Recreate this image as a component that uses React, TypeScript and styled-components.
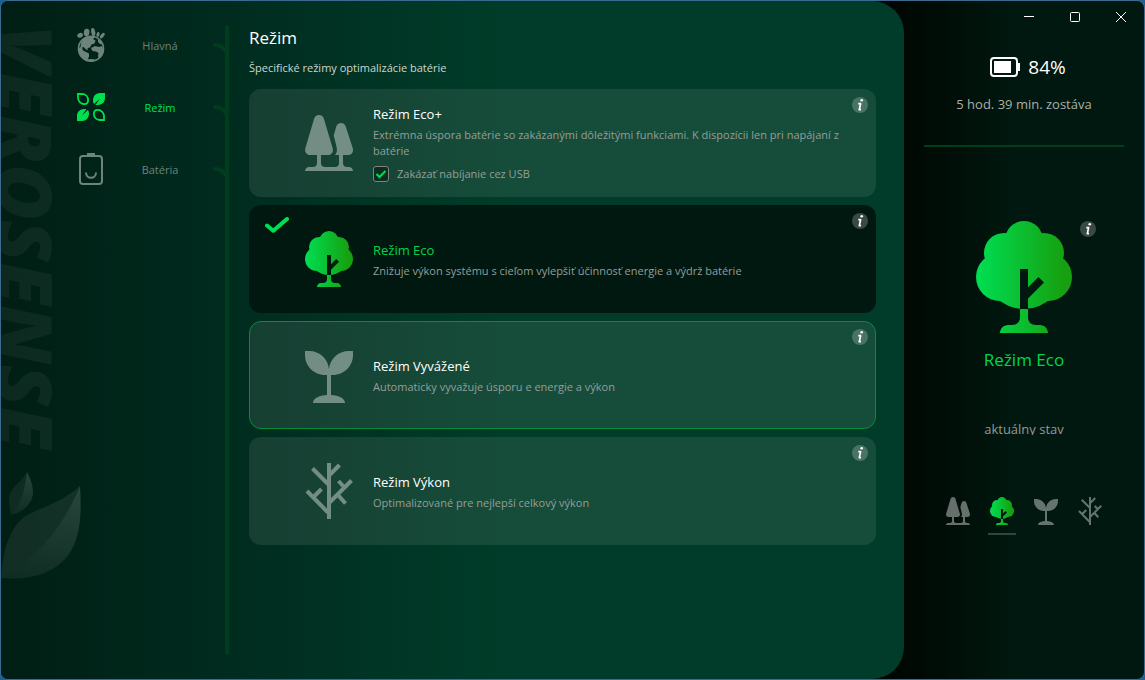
import React, { useId, useState } from "react";
import styled, { createGlobalStyle } from "styled-components";

type ModeId = "ecoPlus" | "eco" | "balanced" | "performance";

interface Mode {
  id: ModeId;
  title: string;
  description: string;
  option?: string;
}

const modes: Mode[] = [
  {
    id: "ecoPlus",
    title: "Režim Eco+",
    description:
      "Extrémna úspora batérie so zakázanými dôležitými funkciami. K dispozícii len pri napájaní z batérie",
    option: "Zakázať nabíjanie cez USB",
  },
  {
    id: "eco",
    title: "Režim Eco",
    description: "Znižuje výkon systému s cieľom vylepšiť účinnosť energie a výdrž batérie",
  },
  {
    id: "balanced",
    title: "Režim Vyvážené",
    description: "Automaticky vyvažuje úsporu e energie a výkon",
  },
  {
    id: "performance",
    title: "Režim Výkon",
    description: "Optimalizované pre nejlepší celkový výkon",
  },
];

const GlobalStyle = createGlobalStyle`
  *, *::before, *::after { box-sizing: border-box; }
  body {
    margin: 0;
    background: #1f5f94;
    font-family: "Open Sans", "Noto Sans", sans-serif;
    font-size: 11px;
    line-height: 16px;
    color: #fff;
  }
  button {
    font: inherit;
    color: inherit;
    background: none;
    border: 0;
    padding: 0;
    cursor: pointer;
  }
  svg { display: block; flex: none; }
`;

const Shell = styled.div`
  display: grid;
  grid-template-columns: minmax(0, 1fr) 240px;
  min-height: 100vh;
  border: 1px solid #3d6b90;
  border-radius: 8px;
  overflow: hidden;
  background: linear-gradient(
    to right,
    #000501 calc(100% - 260px),
    #00180f calc(100% - 130px)
  );
`;

const MainPanel = styled.div`
  display: flex;
  border-radius: 0 32px 32px 0;
  background: linear-gradient(to right, #001e14 0, #002c1f 230px, #003c29 500px);
`;

const Sidebar = styled.aside`
  position: relative;
  display: flex;
  padding: 24px 0;
  overflow: hidden;
`;

const Watermark = styled.div`
  position: absolute;
  top: 24px;
  left: -27px;
  writing-mode: vertical-rl;
  font-size: 76px;
  line-height: 104px;
  font-weight: 800;
  font-style: italic;
  white-space: nowrap;
  color: rgba(255, 255, 255, 0.05);
  user-select: none;
`;

const Leaves = styled.svg`
  position: absolute;
  left: 0;
  top: 470px;
`;

const Nav = styled.nav`
  position: relative;
  display: flex;
  flex-direction: column;
  gap: 20px;
  padding-left: 76px;
`;

const Trunk = styled.div`
  width: 4px;
  border-radius: 2px;
  background: #003d1e;
`;

const NavItem = styled.button<{ $active?: boolean }>`
  display: grid;
  grid-template-columns: 28px 102px 14px;
  column-gap: 4px;
  align-items: center;
  width: 148px;
  height: 42px;
  color: ${(p) => (p.$active ? "#00e04f" : "#6d837c")};
`;

const NavIcon = styled.span`
  padding-bottom: 2px;
`;

const NavLabel = styled.span`
  text-align: center;
`;

const Branch = styled.svg`
  margin-left: -4px;
  overflow: visible;
`;

const Content = styled.main`
  flex: 1;
  min-width: 0;
  padding: 24px 28px 24px 20px;
`;

const Heading = styled.h1`
  margin: 0 0 9px;
  font-size: 17px;
  line-height: 26px;
  font-weight: 400;
`;

const Lead = styled.p`
  margin: 0 0 13px;
  color: #ccd6d1;
`;

const CardList = styled.div`
  display: flex;
  flex-direction: column;
  gap: 8px;
`;

const Card = styled.article<{ $active: boolean; $highlighted: boolean }>`
  position: relative;
  display: flex;
  align-items: center;
  min-height: 108px;
  padding: 11px 15px;
  border-radius: 12px;
  border: 1px solid ${(p) => (p.$highlighted ? "#078c3c" : "transparent")};
  background: ${(p) => (p.$active ? "#00180f" : "rgba(255, 250, 245, 0.085)")};
  color: ${(p) => (p.$active ? "#00d44b" : "#fff")};
`;

const CheckSlot = styled.div`
  align-self: flex-start;
  width: 24px;
  margin-right: 16px;
  color: #00e04f;
`;

const CardText = styled.div`
  display: flex;
  flex-direction: column;
  align-items: flex-start;
  flex: 1;
  min-width: 0;
  margin-left: 20px;
`;

const CardTitle = styled.button`
  font-size: 13px;
  line-height: 20px;
  text-align: left;
`;

const Description = styled.p`
  margin: 3px 0 0;
  color: #959e99;
`;

const Option = styled.label`
  display: flex;
  align-items: center;
  gap: 8px;
  margin-top: 7px;
  color: #959e99;
`;

const TickBox = styled.span`
  position: relative;
  width: 16px;
  height: 16px;

  input {
    appearance: none;
    display: block;
    width: 16px;
    height: 16px;
    margin: 0;
    border: 1px solid #85807f;
    border-radius: 3px;
    background: #0c2e22;
  }

  svg {
    position: absolute;
    inset: 0;
    pointer-events: none;
    visibility: hidden;
  }

  input:checked + svg {
    visibility: visible;
  }
`;

const InfoButton = styled.button`
  position: absolute;
  width: 16px;
  height: 16px;
  border-radius: 50%;
  background: rgba(255, 255, 255, 0.22);
  color: #fff;
`;

const CardInfo = styled(InfoButton)`
  top: 7px;
  right: 7px;
`;

const StatusInfo = styled(InfoButton)`
  top: 0;
  left: calc(100% + 8px);
`;

const StatusPanel = styled.aside`
  display: flex;
  flex-direction: column;
  align-items: center;
  font-size: 13px;
  line-height: 20px;
`;

const WindowControls = styled.div`
  display: flex;
  align-self: flex-end;
`;

const WindowButton = styled.button`
  display: flex;
  align-items: center;
  justify-content: center;
  width: 46px;
  height: 32px;
`;

const BatteryLevel = styled.div`
  display: flex;
  align-items: center;
  gap: 8px;
  margin-top: 20px;
  padding-left: 8px;
  font-size: 19px;
  line-height: 28px;
`;

const Remaining = styled.div`
  margin-top: 13px;
  color: #a8b0ac;
`;

const Divider = styled.hr`
  width: 200px;
  height: 2px;
  margin: 31px 0 74px;
  border: 0;
  background: #003d1e;
`;

const CurrentMode = styled.div`
  position: relative;
`;

const CurrentName = styled.div`
  margin-top: 14px;
  font-size: 17px;
  line-height: 26px;
  color: #00d44b;
`;

const CurrentCaption = styled.div`
  height: 16px;
  margin-top: 46px;
  overflow: hidden;
  color: #929b97;
`;

const ModeSwitch = styled.div`
  display: flex;
  gap: 16px;
  margin-top: 62px;
`;

const SwitchButton = styled.button<{ $active: boolean }>`
  display: flex;
  justify-content: center;
  width: 28px;
  padding-bottom: 8px;
  border-bottom: 2px solid ${(p) => (p.$active ? "#33463e" : "transparent")};
`;

function EcoPlusIcon() {
  return (
    <g fill="#fff" opacity="0.4">
      <path d="M14 0c2.500 0 4.200 1.500 4.900 3.800l8.700 29.200c1.100 3.800-1 7-4.800 7H5.200c-3.800 0-5.900-3.200-4.800-7L9.100 3.800C9.800 1.500 11.500 0 14 0z" />
      <path d="M36 8c-2.400 0-4 1.400-4.700 3.600L28.700 20.500l2.300 9c1 4.500 1.800 7-1 10.500h13c3.800 0 5.800-3 4.700-7l-7-21.400C40 9.400 38.400 8 36 8z" />
      <path d="M12 40h4v8c0 2.500 1.500 4 4 4h10c2.500 0 4-1.500 4-4v-8h4v8c0 2.500 1.500 4 4 4h2c2.200 0 4 1.800 4 4H0c0-2.200 1.800-4 4-4h4c2.500 0 4-1.500 4-4z" />
    </g>
  );
}

function EcoIcon() {
  const id = useId();
  return (
    <>
      <defs>
        <linearGradient id={`${id}g`} gradientUnits="userSpaceOnUse" x1="2" y1="0" x2="44" y2="0">
          <stop offset="0" stopColor="#00dc50" />
          <stop offset="1" stopColor="#16a010" />
        </linearGradient>
        <mask id={`${id}m`}>
          <rect width="48" height="56" fill="#fff" />
          <path d="M22 24h4v9.200l5.200-5.200 2.800 2.800-8 8V44h-4z" fill="#000" />
        </mask>
      </defs>
      <g fill={`url(#${id}g)`}>
        <g mask={`url(#${id}m)`}>
          <circle cx="24" cy="9.500" r="9.500" />
          <circle cx="14" cy="16" r="10" />
          <circle cx="34" cy="16" r="10" />
          <circle cx="12" cy="28" r="12" />
          <circle cx="36" cy="28" r="12" />
          <circle cx="24" cy="24" r="20" />
        </g>
        <path d="M22 44h4v4c0 2.500 1.500 4 4 4h2c2.200 0 4 1.800 4 4H12c0-2.200 1.800-4 4-4h2c2.500 0 4-1.500 4-4z" />
      </g>
    </>
  );
}

function BalancedIcon() {
  return (
    <g fill="#fff" opacity="0.4">
      <path d="M0 4h4c11 0 19 8 20 18C25 12 33 4 44 4h4v4c0 11-9 20-20 20h-2v20.100c8 .4 14 3.600 14 7.900H8c0-4.300 6-7.500 14-7.900V28h-2C9 28 0 19 0 8z" />
    </g>
  );
}

function PerformanceIcon() {
  return (
    <g stroke="#fff" fill="none" opacity="0.4">
      <path
        d="M24 0v56M7.500 5.500 24 22M34.500 2 24 12.500M46.500 17.500 24 40M33.500 18l5.500 6M40.500 40.500 33 32M2 28l22 22.500M16.500 26 9 33.500"
        strokeWidth="4"
      />
    </g>
  );
}

const modeShapes: Record<ModeId, () => React.JSX.Element> = {
  ecoPlus: EcoPlusIcon,
  eco: EcoIcon,
  balanced: BalancedIcon,
  performance: PerformanceIcon,
};

function ModeIcon({ id, width }: { id: ModeId; width: number }) {
  const Shape = modeShapes[id];
  return (
    <svg width={width} height={(width * 7) / 6} viewBox="0 0 48 56" aria-hidden="true">
      <Shape />
    </svg>
  );
}

function InfoGlyph() {
  return (
    <svg width="16" height="16" viewBox="0 0 16 16" aria-hidden="true">
      <circle cx="9.700" cy="3.300" r="1.300" fill="currentColor" />
      <path
        d="M6.300 6.700h2.300L7.300 12.600h1.700"
        fill="none"
        stroke="currentColor"
        strokeWidth="1.700"
        strokeLinejoin="round"
      />
    </svg>
  );
}

function GlobeIcon() {
  return (
    <svg width="28" height="34" viewBox="0 0 28 34" fill="currentColor" aria-hidden="true">
      <ellipse cx="3.100" cy="7.300" rx="2.900" ry="2.300" transform="rotate(-25 3.100 7.300)" />
      <ellipse cx="9.600" cy="4.500" rx="2.800" ry="3.700" transform="rotate(10 9.600 4.500)" />
      <ellipse cx="16.200" cy="4" rx="2" ry="4.100" transform="rotate(-12 16.200 4)" />
      <ellipse cx="21" cy="6.500" rx="1.500" ry="2.600" transform="rotate(12 21 6.500)" />
      <ellipse cx="25.300" cy="7.600" rx="1.600" ry="3.300" transform="rotate(38 25.300 7.600)" />
      <circle cx="14" cy="20.700" r="12.500" fill="none" stroke="currentColor" strokeWidth="1.600" />
      <path d="M6 11c4-3 9-3.500 12.500-2.300L16 11l2.500 1.500-1 3-3 1-1.500 3-2.500.5.500 2-2-.500-2.500-2.500-1.500.500 1 3 3 1.500 3 1.500v3l-2 5C6 31 1.500 26.500 1.200 21l2.300-2 .5-4z" />
      <path d="M14 20l4-2 4 1 2.500-1L27 21c0 4-2 7.500-5 10l-1-3 .5-3-2.500-1.500-3.500-.5z" />
      <path d="M21 11l3 2.500 1.500 3-2.500-.500-2-2z" />
      <path d="M9 32c3-1.500 7-1.500 10 0-3 1.800-7 1.800-10 0z" />
    </svg>
  );
}

function ModesIcon() {
  return (
    <svg width="28" height="28" viewBox="0 0 28 28" fill="currentColor" aria-hidden="true">
      <g fill="none" stroke="currentColor" strokeWidth="1.800">
        <path d="M1 1h4c3.700 0 6.100 2.800 6.100 6.300 0 2.300-1.500 3.800-3.800 3.800C3.600 11.100 1 8.200 1 4.500z" />
        <path d="M27 27h-4c-3.700 0-6.100-2.800-6.100-6.300 0-2.300 1.500-3.800 3.800-3.800 3.700 0 6.300 2.900 6.300 6.600z" />
      </g>
      <path d="M28 0v5c0 4-3 7-7 7h-2.500l4.500-6.500L17.200 11C16.300 10 16 9 16 7.500 16 3 19 0 23 0z" />
      <path d="M0 28v-5c0-4 3-7 7-7h2.500L5 22.500l5.800-5.500c.9 1 1.200 2 1.200 3.500 0 4.500-3 7.500-7 7.500z" />
    </svg>
  );
}

function BatteryIcon() {
  return (
    <svg width="28" height="32" viewBox="0 0 28 32" fill="none" stroke="currentColor" aria-hidden="true">
      <rect x="3" y="3" width="22" height="28" rx="3" strokeWidth="2" />
      <path d="M10 1h8" strokeWidth="2" />
      <path d="M9 19.500c0 7 10 7 10 0" strokeWidth="2" />
    </svg>
  );
}

const navItems = [
  { label: "Hlavná", icon: <GlobeIcon /> },
  { label: "Režim", icon: <ModesIcon /> },
  { label: "Batéria", icon: <BatteryIcon /> },
];

function LeavesArt() {
  return (
    <Leaves width="82" height="110" viewBox="0 0 82 110" aria-hidden="true">
      <defs>
        <linearGradient id="leafShade" x1="0" y1="0" x2="0" y2="1">
          <stop offset="0" stopColor="#fff" stopOpacity="0.160" />
          <stop offset="1" stopColor="#fff" stopOpacity="0.060" />
        </linearGradient>
      </defs>
      <path d="M26 1C21 12 8 15 8 29c0 6 1 10 2 15C20 34 24 18 26 1z" fill="#fff" opacity="0.060" />
      <path d="M26 1c3 6 6 13 6 20 0 12-11 21-22 23C20 34 24 18 26 1z" fill="url(#leafShade)" />
      <path d="M79 15C62 30 47 34 30 42 9 52 2 78 0 107 38 86 63 54 79 15z" fill="#fff" opacity="0.070" />
      <path d="M79 15c2 30 0 52-11 68-13 19-40 27-68 24 38-21 63-53 79-92z" fill="url(#leafShade)" />
    </Leaves>
  );
}

export default function App() {
  const [section, setSection] = useState("Režim");
  const [active, setActive] = useState<ModeId>("eco");
  const [usbOff, setUsbOff] = useState(true);
  const current = modes.find((m) => m.id === active)!;

  return (
    <>
      <GlobalStyle />
      <Shell>
        <MainPanel>
          <Sidebar>
            <Watermark aria-hidden="true">VEROSENSE</Watermark>
            <LeavesArt />
            <Nav>
              {navItems.map((item) => (
                <NavItem
                  key={item.label}
                  $active={item.label === section}
                  onClick={() => setSection(item.label)}
                >
                  <NavIcon>{item.icon}</NavIcon>
                  <NavLabel>{item.label}</NavLabel>
                  <Branch width="14" height="42" viewBox="0 0 14 42" aria-hidden="true">
                    <path
                      d="M4 20c6 0 11 4 13 11"
                      fill="none"
                      stroke="#003d1e"
                      strokeWidth="4"
                      strokeLinecap="round"
                    />
                  </Branch>
                </NavItem>
              ))}
            </Nav>
            <Trunk />
          </Sidebar>

          <Content>
            <Heading>Režim</Heading>
            <Lead>Špecifické režimy optimalizácie batérie</Lead>
            <CardList>
              {modes.map((mode) => (
                <Card
                  key={mode.id}
                  $active={mode.id === active}
                  $highlighted={mode.id === "balanced"}
                >
                  <CheckSlot>
                    {mode.id === active && (
                      <svg width="24" height="16" viewBox="0 0 24 16" aria-hidden="true">
                        <path
                          d="M2 8.500 8.300 13.800 22 2"
                          fill="none"
                          stroke="currentColor"
                          strokeWidth="4"
                          strokeLinecap="round"
                          strokeLinejoin="round"
                        />
                      </svg>
                    )}
                  </CheckSlot>
                  <ModeIcon id={mode.id} width={48} />
                  <CardText>
                    <CardTitle onClick={() => setActive(mode.id)}>{mode.title}</CardTitle>
                    <Description>{mode.description}</Description>
                    {mode.option && (
                      <Option>
                        <TickBox>
                          <input
                            type="checkbox"
                            checked={usbOff}
                            onChange={(e) => setUsbOff(e.target.checked)}
                          />
                          <svg width="16" height="16" viewBox="0 0 16 16" aria-hidden="true">
                            <path d="M3.500 8l3 3L12.500 5" fill="none" stroke="#00e04f" strokeWidth="2" />
                          </svg>
                        </TickBox>
                        {mode.option}
                      </Option>
                    )}
                  </CardText>
                  <CardInfo aria-label="Informácie">
                    <InfoGlyph />
                  </CardInfo>
                </Card>
              ))}
            </CardList>
          </Content>
        </MainPanel>

        <StatusPanel>
          <WindowControls>
            <WindowButton aria-label="Minimalizovať">
              <svg width="10" height="10" viewBox="0 0 10 10" stroke="#fff" fill="none">
                <path d="M0 4.500h10" />
              </svg>
            </WindowButton>
            <WindowButton aria-label="Maximalizovať">
              <svg width="10" height="10" viewBox="0 0 10 10" stroke="#fff" fill="none">
                <rect x="0.500" y="0.500" width="9" height="9" rx="1" />
              </svg>
            </WindowButton>
            <WindowButton aria-label="Zavrieť">
              <svg width="10" height="10" viewBox="0 0 10 10" stroke="#fff" fill="none">
                <path d="M0 0l10 10M10 0L0 10" />
              </svg>
            </WindowButton>
          </WindowControls>
          <BatteryLevel>
            <svg width="30" height="20" viewBox="0 0 30 20" aria-hidden="true">
              <rect x="1" y="1" width="26" height="18" rx="3" fill="none" stroke="#fff" strokeWidth="2" />
              <rect x="4" y="4" width="17" height="12" fill="#fff" />
              <rect x="28" y="6" width="2" height="8" fill="#fff" />
            </svg>
            84%
          </BatteryLevel>
          <Remaining>5 hod. 39 min. zostáva</Remaining>
          <Divider />
          <CurrentMode>
            <ModeIcon id={active} width={96} />
            <StatusInfo aria-label="Informácie">
              <InfoGlyph />
            </StatusInfo>
          </CurrentMode>
          <CurrentName>{current.title}</CurrentName>
          <CurrentCaption>aktuálny stav</CurrentCaption>
          <ModeSwitch>
            {modes.map((mode) => (
              <SwitchButton
                key={mode.id}
                $active={mode.id === active}
                aria-label={mode.title}
                onClick={() => setActive(mode.id)}
              >
                <ModeIcon id={mode.id} width={24} />
              </SwitchButton>
            ))}
          </ModeSwitch>
        </StatusPanel>
      </Shell>
    </>
  );
}
